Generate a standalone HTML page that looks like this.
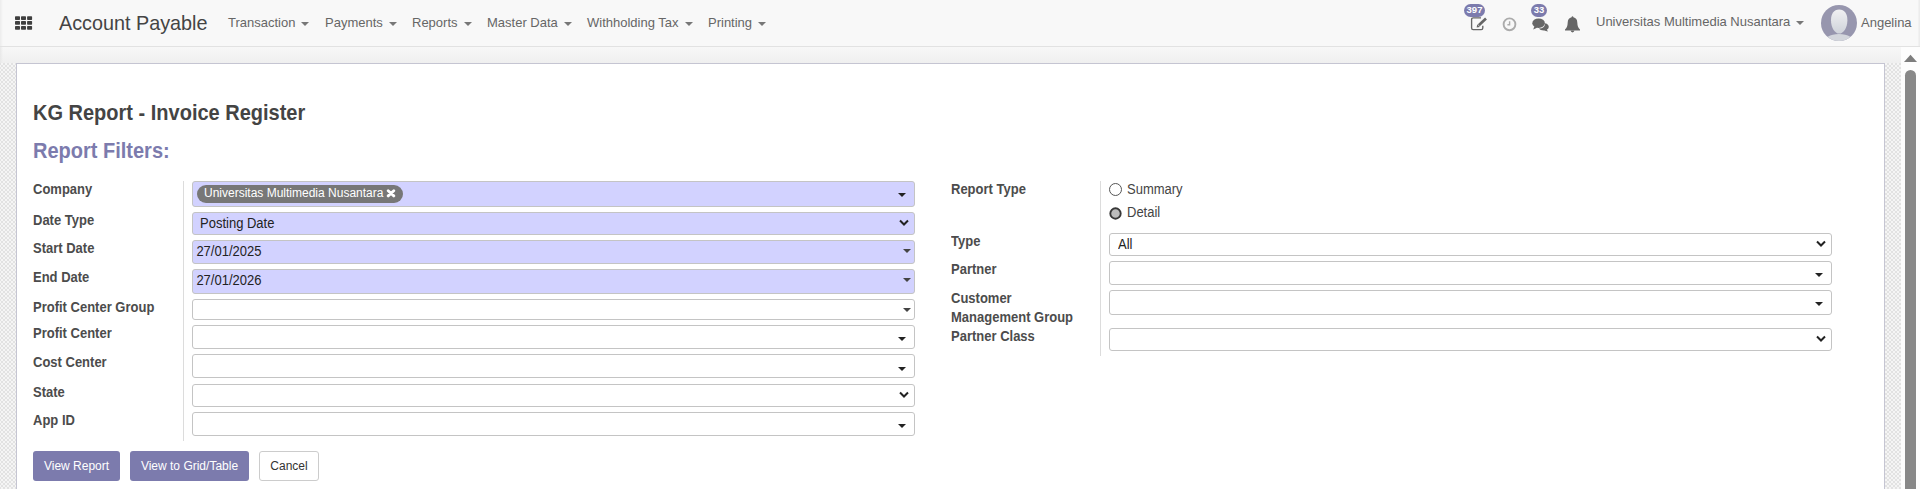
<!DOCTYPE html>
<html><head><meta charset="utf-8">
<style>
*{box-sizing:border-box;margin:0;padding:0}
html,body{width:1920px;height:489px;overflow:hidden;background:#f9f9f9;font-family:"Liberation Sans",sans-serif;color:#4c4c4c}
.a{position:absolute;white-space:nowrap}
#nav{position:absolute;left:0;top:0;width:1920px;height:47px;background:#f8f8f8;border-bottom:1px solid #e2e2e2}
.mi{position:absolute;top:15px;font-size:13px;line-height:15px;color:#666}
.car{display:inline-block;width:0;height:0;border-left:4px solid transparent;border-right:4px solid transparent;border-top:4px solid #777;vertical-align:middle;margin-left:6px}
#bg{position:absolute;left:0;top:47px;width:1901px;height:442px;background:repeating-conic-gradient(#e2e2e2 0 25%,#f5f5f5 0 50%) 1px 0/4px 4px}
#topgrad{position:absolute;left:0;top:47px;width:1901px;height:16px;background:linear-gradient(#f7f7f7,#efefef)}
#sheet{position:absolute;left:16px;top:63px;width:1869px;height:440px;background:#fff;border:1px solid #c5c5d2}
#sb{position:absolute;left:1901px;top:47px;width:19px;height:442px;background:#fdfdfd}
.lbl{position:absolute;font-size:13px;line-height:15px;font-weight:bold;color:#4c4c4c;white-space:nowrap;transform-origin:0 12px;transform:scaleY(1.07)}
.fld{position:absolute;border:1px solid #c4c4c4;border-radius:3px;background:#fff}
.req{background:#d2d2ff}
.ftxt{position:absolute;font-size:13px;line-height:15px;color:#222;transform-origin:0 12px;transform:scaleY(1.07)}
.tri{position:absolute;width:0;height:0;border-left:4px solid transparent;border-right:4px solid transparent;border-top:4px solid #222}
.chev{position:absolute;width:12px;height:8px}
.sep{position:absolute;width:1px;background:#dcdcdc}
.btn{position:absolute;border-radius:3px;font-size:12px;line-height:14px;text-align:center}
</style></head><body>
<div id="nav"><div class="a" style="left:0;top:0;width:3px;height:46px;background:linear-gradient(90deg,#ececec,#f8f8f8)"></div><div class="a" style="left:1918px;top:0;width:2px;height:46px;background:linear-gradient(90deg,#f4f4f4,#e9e9e9)"></div>
  <svg class="a" style="left:15px;top:16px" width="18" height="14" viewBox="0 0 18 14">
    <g fill="#3f3f3f">
      <rect x="0" y="0.3" width="5" height="3.7" rx="0.7"/><rect x="6" y="0.3" width="5" height="3.7" rx="0.7"/><rect x="12.1" y="0.3" width="5" height="3.7" rx="0.7"/>
      <rect x="0" y="5.1" width="5" height="3.7" rx="0.7"/><rect x="6" y="5.1" width="5" height="3.7" rx="0.7"/><rect x="12.1" y="5.1" width="5" height="3.7" rx="0.7"/>
      <rect x="0" y="10.1" width="5" height="3.7" rx="0.7"/><rect x="6" y="10.1" width="5" height="3.7" rx="0.7"/><rect x="12.1" y="10.1" width="5" height="3.7" rx="0.7"/>
    </g>
  </svg>
  <div class="a" style="left:59px;top:12px;font-size:19.8px;line-height:23px;color:#444">Account Payable</div>
  <div class="mi" style="left:228px">Transaction<span class="car"></span></div>
  <div class="mi" style="left:325px">Payments<span class="car"></span></div>
  <div class="mi" style="left:412px">Reports<span class="car"></span></div>
  <div class="mi" style="left:487px">Master Data<span class="car"></span></div>
  <div class="mi" style="left:587px">Withholding Tax<span class="car"></span></div>
  <div class="mi" style="left:708px">Printing<span class="car"></span></div>


  <div class="a" style="left:1464px;top:4px;width:21px;height:13px;border-radius:6.5px;background:#7c7bad"></div>
  <div class="a" style="left:1464px;top:3px;width:21px;height:13px;font-size:9.5px;font-weight:bold;line-height:13px;color:#fff;text-align:center">397</div>
  <svg class="a" style="left:1470px;top:16px" width="18" height="16" viewBox="0 0 18 16">
    <path d="M11 1.9 H3.2 Q1.6 1.9 1.6 3.5 V12 Q1.6 13.6 3.2 13.6 H11.2 Q12.8 13.6 12.8 12 V9.8" fill="none" stroke="#666" stroke-width="1.35"/>
    <path d="M8.8 9.3 L16 2.6" stroke="#666" stroke-width="2.7"/>
    <path d="M6.6 11.6 L7.3 8.3 L9.9 10.9 Z" fill="#666"/>
  </svg>
  <svg class="a" style="left:1502px;top:17px" width="15" height="15" viewBox="0 0 15 15">
    <circle cx="7.5" cy="7.3" r="5.9" fill="none" stroke="#ababab" stroke-width="1.9"/>
    <path d="M7.6 4.2 V7.7 H5.4" fill="none" stroke="#ababab" stroke-width="1.4"/>
  </svg>
  <div class="a" style="left:1531px;top:4px;width:16px;height:13px;border-radius:6.5px;background:#7c7bad"></div>
  <div class="a" style="left:1531px;top:3px;width:16px;height:13px;font-size:9.5px;font-weight:bold;line-height:13px;color:#fff;text-align:center">33</div>
  <svg class="a" style="left:1532px;top:18px" width="18" height="14" viewBox="0 0 18 14">
    <path d="M13.2 5.2 Q16.8 6.2 16.8 9 Q16.8 10.8 14.9 11.8 L16 13.4 Q13.6 13 12.4 12.4 Q8.4 12.6 6.8 10.4 Q12.6 10.6 13.2 5.2 Z" fill="#666"/>
    <ellipse cx="6.6" cy="5.2" rx="6.3" ry="4.8" fill="#666"/>
    <path d="M2.4 8.2 L1.2 11.4 Q3.6 10.6 5.4 9.6 Z" fill="#666"/>
  </svg>
  <svg class="a" style="left:1564px;top:15px" width="17" height="18" viewBox="0 0 17 18">
    <path d="M8.5 1.2 Q9.3 1.2 9.4 2.2 Q13.2 3 13.3 7.6 Q13.4 12.4 16 14.6 V15.4 H1 V14.6 Q3.6 12.4 3.7 7.6 Q3.8 3 7.6 2.2 Q7.7 1.2 8.5 1.2 Z" fill="#666"/>
    <path d="M6.6 15.6 Q6.8 17.4 8.5 17.4 Q10.2 17.4 10.4 15.6 Z" fill="#666"/>
  </svg>
  <div class="mi" style="left:1596px;top:14px">Universitas Multimedia Nusantara<span class="car"></span></div>
  <svg class="a" style="left:1821px;top:5px" width="36" height="36" viewBox="0 0 36 36">
    <defs><clipPath id="cc"><circle cx="18" cy="18" r="18"/></clipPath>
    <linearGradient id="hg" x1="0" y1="0" x2="0" y2="1"><stop offset="0" stop-color="#f0f0f2"/><stop offset="1" stop-color="#cfd3da"/></linearGradient></defs>
    <g clip-path="url(#cc)">
      <rect width="36" height="36" fill="#9796ae"/>
      <ellipse cx="18" cy="38.5" rx="16" ry="9.5" fill="#d3d6dc"/>
      <path d="M18.2 4.6 C23.6 4.6 26.4 9 26.4 15.2 C26.4 22.6 22.6 28.6 18.2 28.6 C13.8 28.6 10 22.6 10 15.2 C10 9 12.8 4.6 18.2 4.6 Z" fill="url(#hg)"/>
    </g>
  </svg>
  <div class="mi" style="left:1861px">Angelina</div>
</div>

<div id="bg"></div>
<div id="topgrad"></div><div class="a" style="left:0;top:47px;width:3px;height:16px;background:linear-gradient(90deg,#e8e8e8,rgba(240,240,240,0))"></div>
<div id="sb"></div>
<div id="sheet"></div>
<svg class="a" style="left:1901px;top:47px" width="19" height="442" viewBox="0 0 19 442">
  <path d="M3 15 L9.5 7.8 L16 15 Z" fill="#7d7d7d"/>
  <rect x="4" y="23" width="11" height="440" rx="5.5" fill="#888"/>
</svg>

<div class="a" style="left:33px;top:102px;font-size:20px;line-height:23px;font-weight:bold;color:#444;transform-origin:0 18.4px;transform:scaleY(1.07)">KG Report - Invoice Register</div>
<div class="a" style="left:33px;top:140px;font-size:20px;line-height:23px;font-weight:bold;color:#7c7bad;transform-origin:0 18.4px;transform:scaleY(1.07)">Report Filters:</div>

<!-- left labels -->
<div class="lbl" style="left:33px;top:182px">Company</div>
<div class="lbl" style="left:33px;top:213px">Date Type</div>
<div class="lbl" style="left:33px;top:241px">Start Date</div>
<div class="lbl" style="left:33px;top:270px">End Date</div>
<div class="lbl" style="left:33px;top:300px">Profit Center Group</div>
<div class="lbl" style="left:33px;top:326px">Profit Center</div>
<div class="lbl" style="left:33px;top:355px">Cost Center</div>
<div class="lbl" style="left:33px;top:385px">State</div>
<div class="lbl" style="left:33px;top:413px">App ID</div>

<div class="sep" style="left:183px;top:181px;height:260px"></div>

<div class="fld req" style="left:192px;top:181px;width:723px;height:26px"></div>
<div class="fld req" style="left:192px;top:212px;width:723px;height:23px"></div>
<div class="fld req" style="left:192px;top:240px;width:723px;height:24px"></div>
<div class="fld req" style="left:192px;top:269px;width:723px;height:25px"></div>
<div class="fld" style="left:192px;top:299px;width:723px;height:21px"></div>
<div class="fld" style="left:192px;top:325px;width:723px;height:24px"></div>
<div class="fld" style="left:192px;top:354px;width:723px;height:24px"></div>
<div class="fld" style="left:192px;top:384px;width:723px;height:23px"></div>
<div class="fld" style="left:192px;top:412px;width:723px;height:24px"></div>

<!-- tag -->
<div class="a" style="left:197px;top:185px;width:206px;height:18px;border-radius:9px;background:#777"></div>
<div class="a" style="left:204px;top:186px;font-size:12px;line-height:14px;color:#fff">Universitas Multimedia Nusantara</div>
<svg class="a" style="left:386px;top:189px" width="10" height="9" viewBox="0 0 10 9"><path d="M2.2 1.7 L7.8 6.9 M7.8 1.7 L2.2 6.9" stroke="#fff" stroke-width="2.8" stroke-linecap="round"/></svg>
<div class="ftxt" style="left:200px;top:216px">Posting Date</div>
<div class="ftxt" style="left:196.4px;top:244px">27/01/2025</div>
<div class="ftxt" style="left:196.4px;top:273px">27/01/2026</div>

<div class="tri" style="left:898px;top:193px"></div>
<svg class="chev" style="left:898px;top:219px"><path d="M2 1.5 L6 5.5 L10 1.5" fill="none" stroke="#222" stroke-width="2"/></svg>
<div class="tri" style="left:903px;top:249px;border-top-color:#444"></div>
<div class="tri" style="left:903px;top:278px;border-top-color:#444"></div>
<div class="tri" style="left:903px;top:308px;border-top-color:#444"></div>
<div class="tri" style="left:898px;top:337px"></div>
<div class="tri" style="left:898px;top:367px"></div>
<svg class="chev" style="left:898px;top:391px"><path d="M2 1.5 L6 5.5 L10 1.5" fill="none" stroke="#222" stroke-width="2"/></svg>
<div class="tri" style="left:898px;top:424px"></div>

<!-- right labels -->
<div class="lbl" style="left:951px;top:182px">Report Type</div>
<div class="lbl" style="left:951px;top:234px">Type</div>
<div class="lbl" style="left:951px;top:262px">Partner</div>
<div class="lbl" style="left:951px;top:291px">Customer</div>
<div class="lbl" style="left:951px;top:310px">Management Group</div>
<div class="lbl" style="left:951px;top:329px">Partner Class</div>

<div class="sep" style="left:1100px;top:181px;height:175px"></div>

<div class="fld" style="left:1109px;top:233px;width:723px;height:23px"></div>
<div class="fld" style="left:1109px;top:261px;width:723px;height:24px"></div>
<div class="fld" style="left:1109px;top:290px;width:723px;height:25px"></div>
<div class="fld" style="left:1109px;top:328px;width:723px;height:23px"></div>
<div class="ftxt" style="left:1118px;top:237px">All</div>
<svg class="chev" style="left:1815px;top:240px"><path d="M2 1.5 L6 5.5 L10 1.5" fill="none" stroke="#222" stroke-width="2"/></svg>
<div class="tri" style="left:1815px;top:273px"></div>
<div class="tri" style="left:1815px;top:302px"></div>
<svg class="chev" style="left:1815px;top:335px"><path d="M2 1.5 L6 5.5 L10 1.5" fill="none" stroke="#222" stroke-width="2"/></svg>

<svg class="a" style="left:1109px;top:183px" width="13" height="13" viewBox="0 0 13 13"><circle cx="6.5" cy="6.5" r="6" fill="#fff" stroke="#555" stroke-width="1"/></svg>
<div class="ftxt" style="left:1127px;top:182px;color:#444">Summary</div>
<svg class="a" style="left:1109px;top:207px" width="13" height="13" viewBox="0 0 13 13"><circle cx="6.5" cy="6.5" r="5.2" fill="#bdbdbd" stroke="#383838" stroke-width="1.9"/></svg>
<div class="ftxt" style="left:1127px;top:205px;color:#444">Detail</div>

<div class="btn" style="left:33px;top:451px;width:87px;height:30px;background:#7c7bad;color:#fff;padding-top:8px">View Report</div>
<div class="btn" style="left:130px;top:451px;width:119px;height:30px;background:#7c7bad;color:#fff;padding-top:8px">View to Grid/Table</div>
<div class="btn" style="left:259px;top:451px;width:60px;height:30px;background:#fff;color:#333;border:1px solid #ccc;padding-top:7px">Cancel</div>
</body></html>
